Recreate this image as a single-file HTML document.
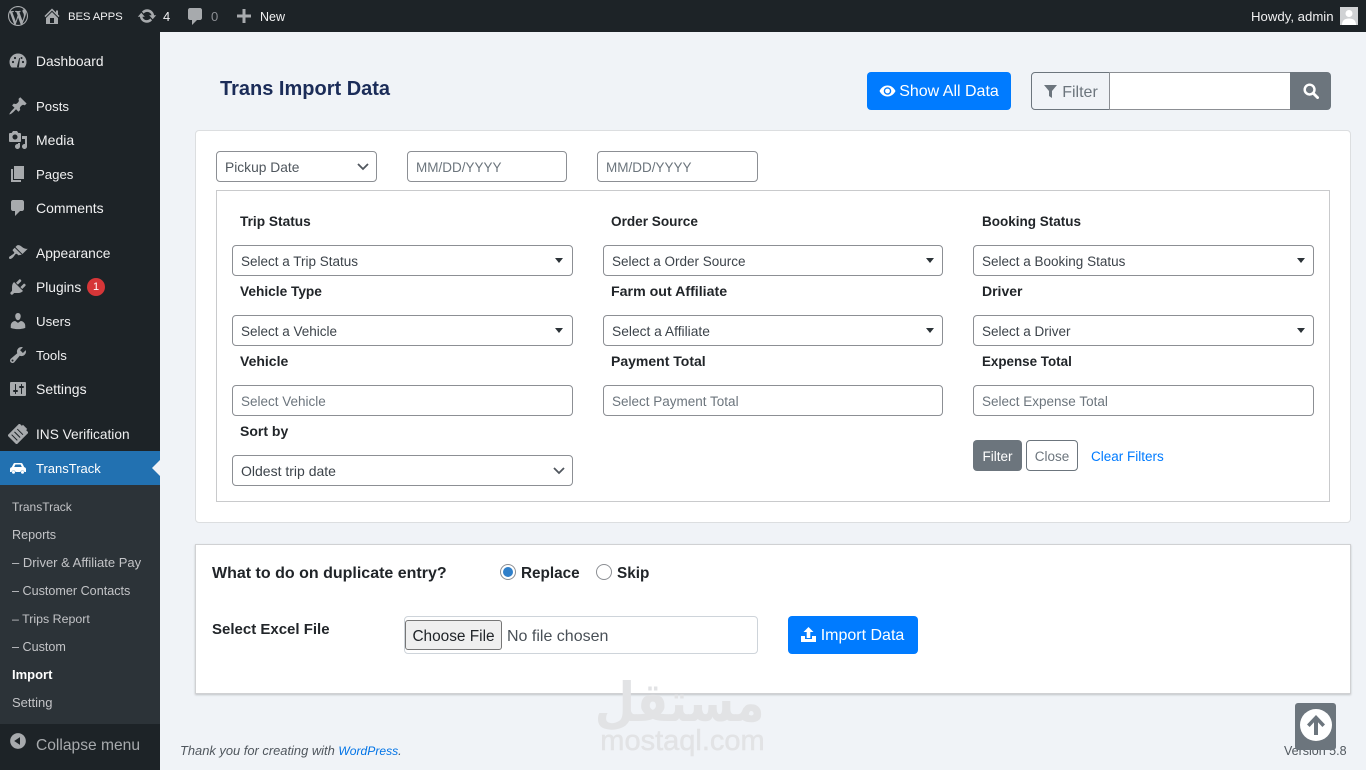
<!DOCTYPE html>
<html lang="en"><head><meta charset="utf-8"><title>Trans Import Data</title>
<style>
*{box-sizing:border-box}
html,body{margin:0;padding:0}
body{width:1366px;height:770px;position:relative;overflow:hidden;background:#f0f3f7;font-family:"Liberation Sans",sans-serif;font-size:14px;color:#212529}
.a{position:absolute}
.t{position:absolute;line-height:20px;white-space:nowrap}
#bar{left:0;top:0;width:1366px;height:32px;background:#1d2327}
#side{left:0;top:32px;width:160px;height:738px;background:#1d2327}
#sub{left:0;top:485px;width:160px;height:239px;background:#2c3338}
#act{left:0;top:451px;width:160px;height:34px;background:#2271b1}
.m{color:#f0f0f1;left:36px;font-size:14px}
.s{color:#c3c4c7;left:12px;font-size:12.6px}
.b{color:#f0f0f1;font-size:13px}
svg{position:absolute;display:block}
.i{fill:#a7aaad}
.card{background:#fff;border:1px solid #dcdee0;border-radius:4px}
.f{position:absolute;height:31px;background:#fff;border:1px solid #8c8f94;border-radius:4px;font-size:13.5px;line-height:31px;padding-left:8px;color:#3c434a;white-space:nowrap}
.ph{color:#6c757d}
.l{font-weight:bold;font-size:14px;color:#212529}
.tri{position:absolute;width:0;height:0;border-left:4.5px solid transparent;border-right:4.5px solid transparent;border-top:5px solid #2c3338}
.btn{position:absolute;border-radius:4px;text-align:center;white-space:nowrap}
.h{font-weight:bold;font-size:16px;color:#212529}
</style></head><body>

<div class="a" id="bar"></div>
<svg style="left:8px;top:6px" width="20" height="20" viewBox="0 0 20 20"><path class="i" d="M20 10c0-5.51-4.49-10-10-10C4.48 0 0 4.49 0 10c0 5.52 4.48 10 10 10 5.51 0 10-4.48 10-10zM7.78 15.37L4.37 6.22c.55-.02 1.17-.08 1.17-.08.5-.06.44-1.13-.06-1.11 0 0-1.45.11-2.37.11-.18 0-.37 0-.58-.01C4.12 2.69 6.87 1.11 10 1.11c2.33 0 4.45.87 6.05 2.34-.68-.11-1.65.39-1.65 1.58 0 .74.45 1.36.9 2.1.35.61.55 1.36.55 2.46 0 1.49-1.4 5-1.4 5l-3.03-8.37c.54-.02.82-.17.82-.17.5-.05.44-1.25-.06-1.22 0 0-1.44.12-2.38.12-.87 0-2.33-.12-2.33-.12-.5-.03-.56 1.2-.06 1.22l.92.08 1.26 3.41zM17.41 10c.24-.64.74-1.87.43-4.25.7 1.29 1.05 2.71 1.05 4.25 0 3.29-1.73 6.24-4.4 7.78.97-2.59 1.94-5.2 2.92-7.78zM6.1 18.09C3.12 16.65 1.11 13.53 1.11 10c0-1.3.23-2.48.72-3.59C3.25 10.3 4.67 14.2 6.1 18.09zm4.03-6.63l2.58 6.98c-.86.29-1.76.45-2.71.45-.79 0-1.57-.11-2.29-.33.81-2.38 1.62-4.74 2.42-7.1z"/></svg>
<svg style="left:42px;top:6px" width="20" height="20" viewBox="0 0 20 20"><path class="i" d="M16 8.5l1.53 1.53-1.06 1.06L10 4.62l-6.47 6.47-1.06-1.06L10 2.5l4 4v-2h2v4zm-6-2.46l6 5.99V18H4v-5.97zM12 17v-5H8v5h4z"/></svg>
<div class="t b" style="left:68px;top:7px;font-size:11.400px;letter-spacing:-.15px">BES APPS</div>
<svg style="left:137px;top:6px" width="20" height="20" viewBox="0 0 20 20"><path class="i" d="M10.2 3.28c3.53 0 6.43 2.61 6.92 6h2.08l-3.5 4-3.5-4h2.32c-.45-1.97-2.21-3.45-4.32-3.45-1.45 0-2.73.71-3.54 1.78L4.95 5.66C6.23 4.2 8.11 3.28 10.2 3.28zm-.4 13.44c-3.52 0-6.43-2.61-6.92-6H.8l3.5-4c1.17 1.33 2.33 2.67 3.5 4H5.48c.45 1.97 2.21 3.45 4.32 3.45 1.45 0 2.73-.71 3.54-1.78l1.71 1.95c-1.28 1.46-3.15 2.38-5.25 2.38z"/></svg>
<div class="t b" style="left:163px;top:7px">4</div>
<svg style="left:185px;top:6px" width="20" height="20" viewBox="0 0 20 20"><path class="i" d="M5 2h10c1.1 0 2 .9 2 2v8c0 1.1-.9 2-2 2h-3l-5 5v-5H5c-1.1 0-2-.9-2-2V4c0-1.100.9-2 2-2z"/></svg>
<div class="t" style="left:211px;top:7px;font-size:13px;color:#8c8f94">0</div>
<svg style="left:234px;top:6px" width="20" height="20" viewBox="0 0 20 20"><path class="i" d="M17 8.500v3h-5.500V17h-3v-5.500H3v-3h5.500V3h3v5.500z"/></svg>
<div class="t b" style="left:260px;top:7px;font-size:12.5px">New</div>
<div class="t b" style="left:1251px;top:7px;font-size:13.2px">Howdy, admin</div>
<div class="a" style="left:1340px;top:7px;width:18px;height:18px;background:#d0d2d4"></div>
<svg style="left:1340px;top:7px" width="18" height="18" viewBox="0 0 18 18"><circle cx="9" cy="6.500" r="3.500" fill="#fff"/><path d="M2 18c0-5 3-6.500 7-6.500s7 1.500 7 6.500z" fill="#fff"/></svg>

<div class="a" id="side"></div>
<div class="a" id="act"></div>
<div class="a" id="sub"></div>
<div class="a" style="left:152px;top:460px;width:0;height:0;border-top:8px solid transparent;border-bottom:8px solid transparent;border-right:8px solid #f0f3f7"></div>

<svg style="left:8px;top:51px" width="20" height="20" viewBox="0 0 20 20"><path class="i" d="M10 2.500a8.500 8.500 0 0 0-8.500 8.500c0 2.200.8 4 2.100 5.500h12.800c1.300-1.500 2.100-3.300 2.100-5.500A8.500 8.500 0 0 0 10 2.500z"/><path d="M9 15.500l2.200-8.500.8.200-1 8.300a1 1 0 1 1-2 0z" fill="#1d2327"/><circle cx="5" cy="11" r="1.100" fill="#1d2327"/><circle cx="7" cy="7" r="1.100" fill="#1d2327"/><circle cx="15" cy="11" r="1.100" fill="#1d2327"/><circle cx="13.500" cy="7" r="1" fill="#1d2327"/></svg>
<div class="t m" style="top:52px;font-size:13.800px">Dashboard</div>

<svg style="left:8px;top:96px" width="20" height="20" viewBox="0 0 20 20"><path class="i" d="M10.440 3.020l1.820-1.820 6.360 6.350-1.830 1.820c-1.050-.68-2.480-.57-3.410.36l-.75.75c-.92.93-1.040 2.350-.35 3.410l-1.830 1.820-2.410-2.410-2.800 2.790c-.42.42-3.380 2.710-3.800 2.290s1.860-3.390 2.280-3.810l2.790-2.790L4.100 9.360l1.830-1.820c1.050.69 2.480.57 3.400-.36l.75-.75c.93-.92 1.050-2.350.36-3.410z"/></svg>
<div class="t m" style="top:97px;font-size:13.200px">Posts</div>

<svg style="left:8px;top:130px" width="20" height="20" viewBox="0 0 20 20"><path class="i" d="M13 11V4c0-.55-.45-1-1-1h-1.670L9 1H5L3.670 3H2c-.55 0-1 .45-1 1v7c0 .55.45 1 1 1h10c.55 0 1-.45 1-1zM7 4.500c1.380 0 2.500 1.120 2.500 2.500S8.380 9.500 7 9.500 4.500 8.380 4.500 7 5.620 4.500 7 4.500zM14 6h5v10.500c0 1.380-1.120 2.500-2.500 2.500S14 17.880 14 16.500s1.120-2.500 2.500-2.500c.17 0 .34.020.5.050V9h-3V6zm-4 8.050V13h2v3.500c0 1.380-1.120 2.500-2.500 2.500S7 17.880 7 16.500 8.120 14 9.500 14c.17 0 .34.020.5.050z"/></svg>
<div class="t m" style="top:130px">Media</div>

<svg style="left:8px;top:164px" width="20" height="20" viewBox="0 0 20 20"><path class="i" d="M6 15V2h10v13H6zm-1 1h8v2H3V5h2v11z"/></svg>
<div class="t m" style="top:165px;font-size:13.200px">Pages</div>

<svg style="left:8px;top:198px" width="20" height="20" viewBox="0 0 20 20"><path class="i" d="M5 2h9c1.100 0 2 .9 2 2v7c0 1.100-.9 2-2 2h-2l-5 5v-5H5c-1.100 0-2-.9-2-2V4c0-1.100.9-2 2-2z"/></svg>
<div class="t m" style="top:198px">Comments</div>

<svg style="left:8px;top:243px" width="20" height="20" viewBox="0 0 20 20"><path class="i" d="M14.480 11.060L7.410 3.990l1.500-1.500c.5-.56 2.300-.47 3.510.32 1.210.8 1.430 1.280 2.910 2.100 1.180.64 2.450 1.260 4.450.85zm-.71.71L6.700 4.700 4.930 6.470c-.39.39-.39 1.020 0 1.410l1.060 1.060c.39.39.39 1.030 0 1.420-.6.6-1.430 1.110-2.210 1.690-.35.26-.7.53-1.010.84C1.430 13.230.4 14.750 1.320 15.670c.92.92 2.440-.11 3.780-1.450.31-.31.58-.66.84-1.010.58-.78 1.090-1.610 1.690-2.210.39-.39 1.030-.39 1.420 0l1.060 1.060c.39.39 1.020.39 1.410 0z"/></svg>
<div class="t m" style="top:244px;font-size:13.800px">Appearance</div>

<svg style="left:8px;top:277px" width="20" height="20" viewBox="0 0 20 20"><path class="i" d="M13.110 4.360L9.870 7.600 8 5.730l3.240-3.240c.35-.34 1.050-.2 1.560.32.52.51.66 1.210.31 1.550zm-8 1.770l.91-1.120 9.010 9.010-1.190.84c-.71.71-2.630 1.160-3.820 1.160H6.140L4.900 17.260c-.59.59-1.540.59-2.120 0-.59-.58-.59-1.530 0-2.120l1.240-1.240v-3.880c0-1.130.4-3.190 1.090-3.890zm7.260 3.970l3.240-3.240c.34-.35 1.040-.21 1.550.31.52.51.66 1.210.31 1.550l-3.240 3.250z"/></svg>
<div class="t m" style="top:278px;font-size:13.800px">Plugins</div>
<div class="a" style="left:87px;top:278px;width:18px;height:18px;border-radius:50%;background:#d63638;color:#fff;font-size:11px;line-height:18px;text-align:center">1</div>

<svg style="left:8px;top:311px" width="20" height="20" viewBox="0 0 20 20"><path class="i" d="M10 9.250c-2.270 0-2.730-3.440-2.730-3.440C7 4.020 7.820 2 9.970 2c2.160 0 2.980 2.020 2.710 3.810 0 0-.41 3.440-2.680 3.440zm0 2.570L12.720 10c2.390 0 4.520 2.330 4.520 4.530v2.490s-3.650 1.130-7.240 1.130c-3.650 0-7.240-1.130-7.240-1.130v-2.490c0-2.250 1.940-4.480 4.470-4.480z"/></svg>
<div class="t m" style="top:312px;font-size:13.300px">Users</div>

<svg style="left:8px;top:345px" width="20" height="20" viewBox="0 0 20 20"><path class="i" d="M16.680 9.770c-1.340 1.340-3.300 1.670-4.950.99l-5.410 6.520c-.99.99-2.590.99-3.580 0s-.99-2.590 0-3.570l6.520-5.420c-.68-1.650-.35-3.610.99-4.950 1.280-1.280 3.120-1.620 4.720-1.060l-2.890 2.890 2.820 2.820 2.860-2.870c.53 1.580.18 3.390-1.080 4.650zM3.810 16.210c.4.39 1.040.39 1.430 0 .4-.4.4-1.040 0-1.430-.39-.4-1.030-.4-1.430 0-.39.39-.39 1.030 0 1.430z"/></svg>
<div class="t m" style="top:346px;font-size:13.200px">Tools</div>

<svg style="left:8px;top:379px" width="20" height="20" viewBox="0 0 20 20"><path class="i" d="M18 16V4c0-.55-.45-1-1-1H3c-.55 0-1 .45-1 1v12c0 .55.45 1 1 1h14c.55 0 1-.45 1-1zM8 11h1c.55 0 1 .45 1 1s-.45 1-1 1H8v1.500c0 .28-.22.5-.5.5s-.5-.22-.5-.5V13H6c-.55 0-1-.45-1-1s.45-1 1-1h1V5.500c0-.28.22-.5.5-.5s.5.22.5.5V11zm5-2h-1c-.55 0-1-.45-1-1s.45-1 1-1h1V5.500c0-.28.22-.5.5-.5s.5.22.5.5V7h1c.55 0 1 .45 1 1s-.45 1-1 1h-1v5.500c0 .28-.22.5-.5.5s-.5-.22-.5-.5V9z"/></svg>
<div class="t m" style="top:379px">Settings</div>

<svg style="left:8px;top:424px" width="20" height="20" viewBox="0 0 20 20"><g transform="rotate(45 10 10)"><rect class="i" x="3.500" y="1.500" width="13" height="17" rx="1"/><rect x="7" y="0" width="6" height="2.500" fill="#a7aaad"/><path d="M6 7h8M6 11h8M6 15h8" stroke="#1d2327" stroke-width="1"/></g></svg>
<div class="t m" style="top:425px;font-size:13.700px">INS Verification</div>

<svg style="left:8px;top:458px" width="20" height="20" viewBox="0 0 20 20"><path fill="#fff" d="M2 14v-3c0-1 .8-1.700 1.800-1.900L5.500 5.800C5.900 5.200 6.500 5 7.200 5h5.600c.7 0 1.300.2 1.700.8l1.700 3.300c1 .2 1.800.9 1.800 1.900v3h-1.600a2 2 0 0 0-3.900 0H7.500a2 2 0 0 0-3.900 0zM6.200 9h7.600l-1.200-2.500H7.400z"/><circle cx="5.500" cy="14.300" r="1.500" fill="#fff"/><circle cx="14.500" cy="14.300" r="1.500" fill="#fff"/></svg>
<div class="t m" style="top:459px;color:#fff;font-size:13px">TransTrack</div>

<div class="t s" style="top:497px;font-size:12px">TransTrack</div>
<div class="t s" style="top:525px">Reports</div>
<div class="t s" style="top:553px;font-size:13px">– Driver &amp; Affiliate Pay</div>
<div class="t s" style="top:581px">– Customer Contacts</div>
<div class="t s" style="top:609px;font-size:12.400px">– Trips Report</div>
<div class="t s" style="top:637px">– Custom</div>
<div class="t s" style="top:665px;color:#fff;font-weight:bold;font-size:13px">Import</div>
<div class="t s" style="top:693px;font-size:13px">Setting</div>

<svg style="left:8px;top:731px" width="20" height="20" viewBox="0 0 20 20"><path class="i" d="M10 2.160c4.330 0 7.840 3.510 7.840 7.840s-3.510 7.840-7.840 7.840S2.160 14.330 2.160 10 5.710 2.160 10 2.160zm2 11.720V6.120L6.180 9.970z"/></svg>
<div class="t" style="left:36px;top:736px;font-size:15.600px;color:#a7aaad">Collapse menu</div>

<div class="t" style="left:220px;top:78px;font-size:20px;line-height:22px;font-weight:bold;color:#1b2c58">Trans Import Data</div>

<div class="btn" style="left:867px;top:72px;width:144px;height:38px;background:#007bff;color:#fff;font-size:16px;line-height:40px;padding-left:20px">Show All Data</div>
<svg style="left:879px;top:83px" width="17" height="16" viewBox="0 0 17 16"><path fill="#fff" d="M8.500 2.500C5 2.500 2 4.800.5 8c1.500 3.200 4.500 5.500 8 5.500s6.500-2.300 8-5.500c-1.500-3.200-4.500-5.500-8-5.500zm0 9.300a3.800 3.800 0 1 1 0-7.600 3.800 3.800 0 0 1 0 7.600z"/><circle cx="8.500" cy="8" r="2.400" fill="#fff"/></svg>

<div class="btn" style="left:1031px;top:72px;width:79px;height:38px;border:1px solid #6c757d;border-radius:4px 0 0 4px;color:#6c757d;font-size:16px;line-height:39px;padding-left:19px">Filter</div>
<svg style="left:1044px;top:85px" width="13" height="13" viewBox="0 0 13 13"><path fill="#6c757d" d="M0 0h13L8 6v7L5 11V6z"/></svg>
<input class="a" type="text" style="left:1109px;top:72px;width:182px;height:38px;border:1px solid #8c8f94;background:#fff;padding:0 8px;outline:0;border-radius:0">
<div class="a" style="left:1290px;top:72px;width:41px;height:38px;background:#6c757d;border-radius:0 4px 4px 0"></div>
<svg style="left:1303px;top:83px" width="16" height="16" viewBox="0 0 17 17"><circle cx="7" cy="7" r="5.200" fill="none" stroke="#fff" stroke-width="2.600"/><path d="M11 11l4.500 4.500" stroke="#fff" stroke-width="3" stroke-linecap="round"/></svg>

<div class="a card" style="left:195px;top:130px;width:1156px;height:393px"></div>

<div class="f" style="left:216px;top:151px;width:161px;color:#50575e;font-size:13.800px">Pickup Date</div>
<svg style="left:356px;top:162px" width="14" height="10" viewBox="0 0 14 10"><path d="M2 2l5 5 5-5" fill="none" stroke="#50575e" stroke-width="1.800"/></svg>
<div class="f ph" style="left:407px;top:151px;width:160px">MM/DD/YYYY</div>
<div class="f ph" style="left:597px;top:151px;width:161px">MM/DD/YYYY</div>

<div class="a" style="left:216px;top:190px;width:1114px;height:312px;border:1px solid #c9cacc"></div>

<div class="t l" style="left:240px;top:212px;font-size:13.700px">Trip Status</div>
<div class="t l" style="left:611px;top:212px;font-size:13.600px">Order Source</div>
<div class="t l" style="left:982px;top:212px;font-size:13.500px">Booking Status</div>
<div class="f" style="left:232px;top:245px;width:341px">Select a Trip Status</div><div class="tri" style="left:555px;top:258px"></div>
<div class="f" style="left:603px;top:245px;width:340px">Select a Order Source</div><div class="tri" style="left:926px;top:258px"></div>
<div class="f" style="left:973px;top:245px;width:341px">Select a Booking Status</div><div class="tri" style="left:1297px;top:258px"></div>

<div class="t l" style="left:240px;top:282px;font-size:13.700px">Vehicle Type</div>
<div class="t l" style="left:611px;top:282px;font-size:14.200px">Farm out Affiliate</div>
<div class="t l" style="left:982px;top:281px">Driver</div>
<div class="f" style="left:232px;top:315px;width:341px">Select a Vehicle</div><div class="tri" style="left:555px;top:328px"></div>
<div class="f" style="left:603px;top:315px;width:340px;font-size:13.800px">Select a Affiliate</div><div class="tri" style="left:926px;top:328px"></div>
<div class="f" style="left:973px;top:315px;width:341px">Select a Driver</div><div class="tri" style="left:1297px;top:328px"></div>

<div class="t l" style="left:240px;top:351px">Vehicle</div>
<div class="t l" style="left:611px;top:351px">Payment Total</div>
<div class="t l" style="left:982px;top:352px;font-size:13.400px">Expense Total</div>
<div class="f ph" style="left:232px;top:385px;width:341px">Select Vehicle</div>
<div class="f ph" style="left:603px;top:385px;width:340px">Select Payment Total</div>
<div class="f ph" style="left:973px;top:385px;width:341px">Select Expense Total</div>

<div class="t l" style="left:240px;top:421px">Sort by</div>
<div class="f" style="left:232px;top:455px;width:341px;font-size:14px">Oldest trip date</div>
<svg style="left:552px;top:466px" width="14" height="10" viewBox="0 0 14 10"><path d="M2 2l5 5 5-5" fill="none" stroke="#50575e" stroke-width="1.800"/></svg>

<div class="btn" style="left:973px;top:440px;width:49px;height:31px;background:#6c757d;color:#fff;line-height:33px;font-size:13.500px">Filter</div>
<div class="btn" style="left:1026px;top:440px;width:52px;height:31px;background:#fff;border:1px solid #6c757d;color:#6c757d;line-height:31px;font-size:13.500px">Close</div>
<div class="t" style="left:1091px;top:447px;color:#007bff;font-size:13.500px">Clear Filters</div>

<div class="a" style="left:195px;top:544px;width:1156px;height:150px;background:#fff;border:1px solid #d0d1d3;box-shadow:0 1px 2px rgba(0,0,0,.2)"></div>
<div class="t h" style="left:212px;top:564px">What to do on duplicate entry?</div>
<div class="a" style="left:500px;top:564px;width:16px;height:16px;border-radius:50%;border:1px solid #8c8f94;background:#fff"></div>
<div class="a" style="left:503px;top:567px;width:10px;height:10px;border-radius:50%;background:#2f7fc9"></div>
<div class="t h" style="left:521px;top:564px;font-size:15.300px">Replace</div>
<div class="a" style="left:596px;top:564px;width:16px;height:16px;border-radius:50%;border:1px solid #8c8f94;background:#fff"></div>
<div class="t h" style="left:617px;top:564px;font-size:15.300px">Skip</div>

<div class="t h" style="left:212px;top:620px;font-size:15px">Select Excel File</div>
<div class="a" style="left:404px;top:616px;width:354px;height:38px;border:1px solid #ced4da;border-radius:4px;background:#fff"></div>
<div class="btn" style="left:405px;top:620px;width:97px;height:30px;background:#efefef;border:1px solid #767676;border-radius:3px;font-size:15.400px;line-height:31px;color:#212529">Choose File</div>
<div class="t" style="left:507px;top:627px;font-size:16px;color:#495057">No file chosen</div>
<div class="btn" style="left:788px;top:616px;width:130px;height:38px;background:#007bff;color:#fff;font-size:16px;line-height:40px;padding-left:19px">Import Data</div>
<svg style="left:800px;top:627px" width="17" height="16" viewBox="0 0 17 16"><path fill="#fff" d="M8.500 0L13.500 5H10.300V11H6.700V5H3.500zM1 9h4v3h7V9h4v6H1z"/></svg>

<div class="t" style="left:180px;top:741px;font-size:12.900px;font-style:italic;color:#50575e">Thank you for creating with <span style="color:#0073e6;font-size:12.100px">WordPress</span>.</div>
<div class="t" style="left:1284px;top:741px;font-size:12.500px;color:#50575e">Version 5.8</div>

<div class="t" dir="rtl" lang="ar" style="left:586px;top:670px;width:192px;height:66px;line-height:66px;font-size:54px;font-weight:bold;text-align:center;color:#e2e3e5;font-family:'DejaVu Sans',sans-serif;transform:scaleX(.86)">مستقل</div>
<div class="t" style="left:595px;top:725px;width:175px;line-height:32px;font-size:29px;text-align:center;color:#e2e3e5;-webkit-text-stroke:.5px #e2e3e5">mostaql.com</div>

<div class="a" style="left:1295px;top:703px;width:41px;height:47px;background:#6c757d;border-radius:3px"></div>
<svg style="left:1300px;top:709px" width="32" height="32" viewBox="0 0 32 32"><circle cx="16" cy="16" r="16" fill="#fff"/><path fill="#6c757d" d="M16 6l9 9.500-2.600 2.500-4.400-4.700V26h-4V13.300L9.600 18 7 15.500z"/></svg>
</body></html>
